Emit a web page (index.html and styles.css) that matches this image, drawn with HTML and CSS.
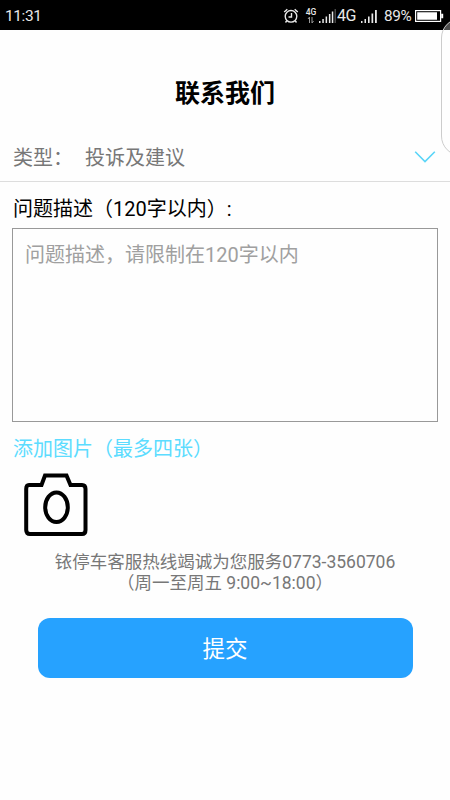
FILE: index.html
```
<!DOCTYPE html>
<html lang="zh-CN">
<head>
<meta charset="utf-8">
<title>联系我们</title>
<link rel="stylesheet" href="styles.css">
</head>
<body>
<header class="status">
  <span class="time">11:31</span>
  <svg class="alarm" width="16" height="16" viewBox="0 0 16 16"><circle cx="8" cy="8.3" r="5.8"/><path d="M1.2 4L4.3 1.2M14.8 4L11.7 1.2M8.5 5V9H5.5M3.8 12.8L2.5 14.5M12.2 12.8L13.5 14.5"/></svg>
  <span class="data"><span class="data-label">4G</span><svg width="8" height="8" viewBox="0 0 8 8"><path d="M2.5 7V1L1 3M5 1V7L6.5 5"/></svg></span>
  <svg class="signal" width="17" height="14" viewBox="0 0 17 14"><path d="M0 12h1.5v2H0zM3.3 10h1.5v4H3.3zM6.6 7.5h1.5V14H6.6zM9.9 5h1.5v9H9.9zM12.8 2.5h1.5V14h-1.5z"/><path class="dim" d="M15.7 0h.9v14h-.9z"/></svg>
  <span class="network">4G</span>
  <svg class="signal second" width="17" height="14" viewBox="0 0 17 14"><path d="M0 12h1.5v2H0zM3.5 10H5v4H3.5zM7 7.5h1.6V14H7zM10.5 4.5h1.7V14h-1.7zM14 1h1.8v13H14z"/></svg>
  <span class="percent">89%</span>
  <svg class="battery" width="29" height="12" viewBox="0 0 29 12"><rect class="shell" x=".6" y=".6" width="25" height="10.8"/><path d="M2.2 2.2H22v7.6H2.2zM26.2 3.8h2v4.4h-2z"/></svg>
</header>
<div class="edge-clip"><div class="edge-panel"></div></div>
<main>
  <h1>联系我们</h1>
  <div class="type-row">
    <span class="type-label">类型：</span>
    <span class="type-value">投诉及建议</span>
    <svg class="chevron" width="22" height="14" viewBox="0 0 22 14"><path d="M1.2 1.8L11 11.5L20.8 1.8"/></svg>
  </div>
  <div class="describe">问题描述（120字以内）:</div>
  <div class="textbox">问题描述，请限制在120字以内</div>
  <div class="add">添加图片（最多四张）</div>
  <svg class="camera" width="64" height="64" viewBox="0 0 64 64"><path d="M5 12H17.5L21 2.5H42.5L46.5 12H58Q61.5 12 61.5 16V57Q61.5 61 58 61H6Q2.2 61 2.2 57V16Q2.2 12 5 12Z"/><ellipse cx="32.5" cy="34.2" rx="11.3" ry="14.8"/></svg>
  <p class="hotline">铱停车客服热线竭诚为您服务0773-3560706<br>（周一至周五 9:00~18:00）</p>
  <button class="submit" type="button">提交</button>
</main>
</body>
</html>
```
FILE: styles.css
```
* { box-sizing: border-box; }
body {
  margin: 0;
  width: 450px;
  height: 800px;
  overflow: hidden;
  background: #fefefe;
  font-family: Roboto, "Noto Sans CJK SC", sans-serif;
  font-size: 20px;
}
svg { display: block; flex: none; }
.status {
  height: 30px;
  display: flex;
  align-items: center;
  padding: 2px 5px 0;
  background: #000;
  color: #e8e8e8;
  font-size: 16px;
  line-height: 28px;
  white-space: nowrap;
}
.time { width: 278px; font-size: 15.5px; letter-spacing: -.4px; }
.alarm { fill: none; stroke: #e8e8e8; stroke-width: 1.4; }
.data { width: 12px; margin-left: 6px; display: flex; flex-direction: column; align-items: center; }
.data-label { font-size: 8.5px; line-height: 8px; font-weight: 500; }
.data svg { fill: none; stroke: #999; stroke-width: 1; }
.signal { fill: #e8e8e8; margin: 0 1px 0 2px; }
.signal .dim { fill: #777; }
.network { width: 20px; font-size: 16px; letter-spacing: -.5px; }
.second { margin: 0 0 0 4px; }
.percent { width: 31px; margin-left: 6px; font-size: 15.3px; letter-spacing: -.4px; }
.battery { fill: #fff; }
.battery .shell { fill: none; stroke: #fff; stroke-width: 1.2; }
.edge-clip { position: absolute; top: 0; right: 0; width: 9px; height: 170px; overflow: hidden; }
.edge-panel {
  position: absolute;
  top: 18px;
  left: 0;
  width: 40px;
  height: 138px;
  border: 1.5px solid #ccc;
  border-radius: 25px;
  background: rgba(255, 255, 255, .3);
}
h1 {
  margin: 46px 0 0;
  font-size: 25px;
  line-height: 36px;
  font-weight: 700;
  text-align: center;
  color: #000;
}
.type-row {
  height: 70px;
  padding: 20px 14px 0 13px;
  display: flex;
  align-items: center;
  border-bottom: 1px solid #ddd;
  color: #777;
}
.type-label { width: 72px; }
.chevron { margin-left: auto; fill: none; stroke: #5ad5f8; stroke-width: 1.6; }
.describe { height: 46px; padding: 12px 13px 0; line-height: 30px; color: #000; }
.textbox {
  height: 194px;
  margin: 0 12px;
  padding: 11px 12px;
  border: 1px solid #999;
  line-height: 30px;
  color: #a0a0a0;
}
.add { margin: 12px 13px 0; line-height: 30px; color: #5cdcff; }
.camera { margin: 9px 0 0 24px; fill: none; stroke: #000; stroke-width: 4; }
.hotline {
  margin: 15px 0 0;
  font-size: 17.5px;
  line-height: 20.5px;
  text-align: center;
  color: #777;
}
.submit {
  display: block;
  width: 375px;
  height: 60px;
  margin: 25px auto 0;
  padding: 0 0 2px;
  border: 0;
  border-radius: 12px;
  background: #26a2ff;
  color: #fff;
  font: 400 22.5px Roboto, "Noto Sans CJK SC", sans-serif;
}
```
